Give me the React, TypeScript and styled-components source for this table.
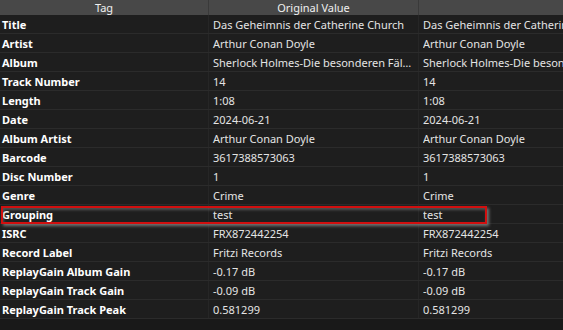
import styled, { createGlobalStyle } from "styled-components";

const GlobalStyle = createGlobalStyle`
  html, body {
    margin: 0;
    padding: 0;
    background: #1a1a1a;
    overflow: hidden;
  }
`;

interface Row {
  tag: string;
  original: string;
  value: string;
  marked?: boolean;
}

const rows: Row[] = [
  {
    tag: "Title",
    original: "Das Geheimnis der Catherine Church",
    value: "Das Geheimnis der Catherine Church",
  },
  { tag: "Artist", original: "Arthur Conan Doyle", value: "Arthur Conan Doyle" },
  {
    tag: "Album",
    original: "Sherlock Holmes-Die besonderen Fälle des Sherlock Holmes",
    value: "Sherlock Holmes-Die besonderen Fälle des Sherlock Holmes",
  },
  { tag: "Track Number", original: "14", value: "14" },
  { tag: "Length", original: "1:08", value: "1:08" },
  { tag: "Date", original: "2024-06-21", value: "2024-06-21" },
  { tag: "Album Artist", original: "Arthur Conan Doyle", value: "Arthur Conan Doyle" },
  { tag: "Barcode", original: "3617388573063", value: "3617388573063" },
  { tag: "Disc Number", original: "1", value: "1" },
  { tag: "Genre", original: "Crime", value: "Crime" },
  { tag: "Grouping", original: "test", value: "test", marked: true },
  { tag: "ISRC", original: "FRX872442254", value: "FRX872442254" },
  { tag: "Record Label", original: "Fritzi Records", value: "Fritzi Records" },
  { tag: "ReplayGain Album Gain", original: "-0.17 dB", value: "-0.17 dB" },
  { tag: "ReplayGain Track Gain", original: "-0.09 dB", value: "-0.09 dB" },
  { tag: "ReplayGain Track Peak", original: "0.581299", value: "0.581299" },
];

const COLUMNS = "209px 210px 220px";

const Table = styled.div`
  width: 563px;
  height: 330px;
  overflow: hidden;
  background: #191919;
  font-family: "Noto Sans", "Open Sans", sans-serif;
  font-size: 11px;
  color: #e6e6e6;
`;

const Header = styled.div`
  display: grid;
  grid-template-columns: ${COLUMNS};
  width: 639px;
  height: 15px;
  background: #484848;
`;

const HeaderCell = styled.div`
  line-height: 15px;
  border-right: 1px solid #3a3a3a;
  color: #f0f0f0;
  text-align: center;
  white-space: nowrap;
  overflow: hidden;
`;

const RowLine = styled.div`
  position: relative;
  display: grid;
  grid-template-columns: ${COLUMNS};
  width: 639px;
  height: 19px;
  background: #1e1e1e;
  border-bottom: 1px solid #2b2b2b;
  box-sizing: border-box;
`;

const Cell = styled.div<{ $tag?: boolean }>`
  padding: 1px ${(p) => (p.$tag ? "2px" : "4px")} 0;
  line-height: 18px;
  border-right: 1px solid #262626;
  font-weight: ${(p) => (p.$tag ? 700 : 400)};
  color: ${(p) => (p.$tag ? "#ffffff" : "#e4e4e4")};
  white-space: nowrap;
  overflow: hidden;
  text-overflow: ${(p) => (p.$tag ? "clip" : "ellipsis")};
`;

const Clip = styled.span`
  display: block;
  overflow: hidden;
  white-space: nowrap;
`;

// red annotation frame drawn over the highlighted row
const Marker = styled.div`
  position: absolute;
  left: 1px;
  top: 1px;
  width: 486px;
  height: 18px;
  border: 2px solid #d10f0f;
  box-sizing: border-box;
  box-shadow: 2px 2px 3px 0 rgba(125, 125, 125, 0.9),
    inset 1px 2px 3px 0 rgba(125, 125, 125, 0.55);
  pointer-events: none;
  z-index: 2;
`;

export default function App() {
  return (
    <>
      <GlobalStyle />
      <Table>
        <Header>
          <HeaderCell>Tag</HeaderCell>
          <HeaderCell>Original Value</HeaderCell>
          <HeaderCell />
        </Header>
        {rows.map((r) => (
          <RowLine key={r.tag}>
            <Cell $tag>{r.tag}</Cell>
            <Cell>{r.original}</Cell>
            <Cell>
              <Clip>{r.value}</Clip>
            </Cell>
            {r.marked && <Marker />}
          </RowLine>
        ))}
      </Table>
    </>
  );
}
